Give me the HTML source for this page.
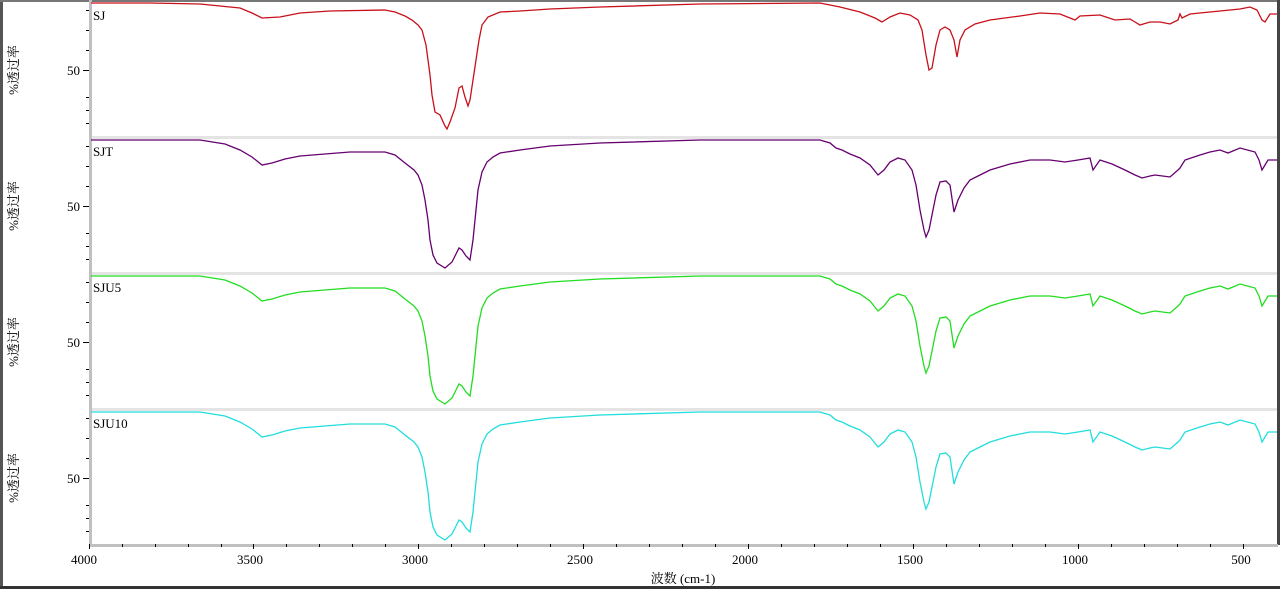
<!DOCTYPE html>
<html><head><meta charset="utf-8"><style>
html,body{margin:0;padding:0;background:#fff;}
svg{display:block;}
text{font-family:"Liberation Serif","Noto Serif CJK SC",serif;font-size:13px;fill:#000;}
</style></head><body>
<svg width="1280" height="589" viewBox="0 0 1280 589" xmlns="http://www.w3.org/2000/svg">
<rect x="0" y="0" width="1280" height="589" fill="#fff"/>
<rect x="0" y="0" width="3" height="589" fill="#555"/>
<rect x="0" y="0" width="1280" height="2" fill="#777"/>
<rect x="0" y="586" width="1280" height="3" fill="#333"/>
<rect x="1277" y="0" width="3" height="545" fill="#444"/>
<rect x="91" y="136" width="1186" height="3" fill="#e4e4e4"/>
<rect x="91" y="272" width="1186" height="3" fill="#e4e4e4"/>
<rect x="91" y="408" width="1186" height="3" fill="#e4e4e4"/>
<rect x="89" y="0" width="3" height="547" fill="#c0c0c0"/>
<rect x="89" y="544" width="1189" height="3" fill="#c0c0c0"/>
<g stroke="#000" stroke-width="1">
<path d="M86 10.5h3M86 30.5h3M86 50.5h3M83 70.5h6M86 97.5h3M86 110.5h3M86 123.5h3
M86 146.5h3M86 166.5h3M86 186.5h3M83 206.5h6M86 233.5h3M86 246.5h3M86 259.5h3
M86 282.5h3M86 302.5h3M86 322.5h3M83 342.5h6M86 369.5h3M86 382.5h3M86 395.5h3
M86 418.5h3M86 438.5h3M86 458.5h3M83 478.5h6M86 505.5h3M86 518.5h3M86 531.5h3"/>
<path d="M89.5 544v5M122.5 544v3M155.5 544v3M188.5 544v3M221.5 544v3M253.5 544v5M286.5 544v3M319.5 544v3M352.5 544v3M385.5 544v3M418.5 544v5M451.5 544v3M484.5 544v3M517.5 544v3M550.5 544v3M583.5 544v5M616.5 544v3M649.5 544v3M682.5 544v3M715.5 544v3M748.5 544v5M781.5 544v3M814.5 544v3M847.5 544v3M880.5 544v3M913.5 544v5M946.5 544v3M979.5 544v3M1012.5 544v3M1045.5 544v3M1078.5 544v5M1111.5 544v3M1144.5 544v3M1177.5 544v3M1210.5 544v3M1243.5 544v5"/>
</g>
<g text-anchor="middle">
<text x="84" y="564">4000</text><text x="250" y="564">3500</text><text x="415" y="564">3000</text><text x="580" y="564">2500</text><text x="745" y="564">2000</text><text x="910" y="564">1500</text><text x="1075" y="564">1000</text><text x="1241" y="564">500</text>
<text x="683" y="583">波数 (cm-1)</text>
</g>
<g text-anchor="end">
<text x="80" y="75">50</text><text x="80" y="211">50</text><text x="80" y="347">50</text><text x="80" y="483">50</text>
</g>
<g text-anchor="middle">
<text transform="translate(18,70) rotate(-90)">%透过率</text>
<text transform="translate(18,206) rotate(-90)">%透过率</text>
<text transform="translate(18,342) rotate(-90)">%透过率</text>
<text transform="translate(18,478) rotate(-90)">%透过率</text>
</g>
<text x="93" y="20">SJ</text>
<text x="93" y="156">SJT</text>
<text x="93" y="292">SJU5</text>
<text x="93" y="428">SJU10</text>
<defs>
<path id="sp2" fill="none" d="M91 140L200 140L225 144L240 150L252 157L262 165L272 163L285 159L300 156L350 152L385 152L395 155L405 163L414 170L418 175L422 185L425 200L428 220L430 240L433 255L437 263L445 268L452 262L456 254L459 248L462 250L466 256L470 260L473 240L476 210L478 190L482 172L487 162L493 157L500 153L520 150L550 146L600 143L700 140L820 140L830 143L836 148L842 150L850 154L860 158L870 165L878 175L884 170L890 162L898 158L905 160L912 170L916 185L920 210L924 230L926 237L929 230L932 215L936 195L940 182L946 181L950 185L954 212L958 200L964 188L970 180L980 175L990 170L1010 164L1030 160L1050 160L1065 162L1078 160L1090 158L1093 170L1100 160L1112 164L1125 170L1135 175L1142 178L1150 176L1155 175L1170 177L1178 170L1180 168L1185 160L1200 155L1210 152L1220 150L1228 153L1240 148L1255 152L1259 160L1262 170L1268 160L1277 160"/>
</defs>
<path fill="none" stroke="#c8101a" stroke-width="1.3" d="M91 3L150 3L200 4L240 8L252 13L262 18L280 17L300 13L330 11L385 10L395 12L405 16L412 20L418 25L422 30L426 45L430 75L432 95L435 112L440 115L445 126L447 129L450 122L455 108L459 88L462 86L465 97L468 106L470 100L473 80L476 60L479 40L482 25L488 17L500 12L520 11L550 9L600 7L700 4L820 3L840 7L860 12L875 18L882 22L890 17L900 13L910 15L918 20L922 30L926 55L929 70L932 68L936 45L940 30L945 27L950 30L954 40L957 57L960 40L965 30L975 24L990 20L1020 16L1040 13L1060 14L1070 18L1075 20L1080 16L1100 15L1115 20L1130 19L1140 25L1150 22L1160 22L1170 24L1178 20L1180 14L1182 18L1190 14L1220 11L1240 9L1250 7L1257 10L1262 20L1265 22L1270 14L1277 14"/>
<use href="#sp2" stroke="#660070" stroke-width="1.3"/>
<use href="#sp2" stroke="#22dd22" stroke-width="1.3" transform="translate(0,136)"/>
<use href="#sp2" stroke="#22dddd" stroke-width="1.3" transform="translate(0,272)"/>
</svg>
</body></html>
